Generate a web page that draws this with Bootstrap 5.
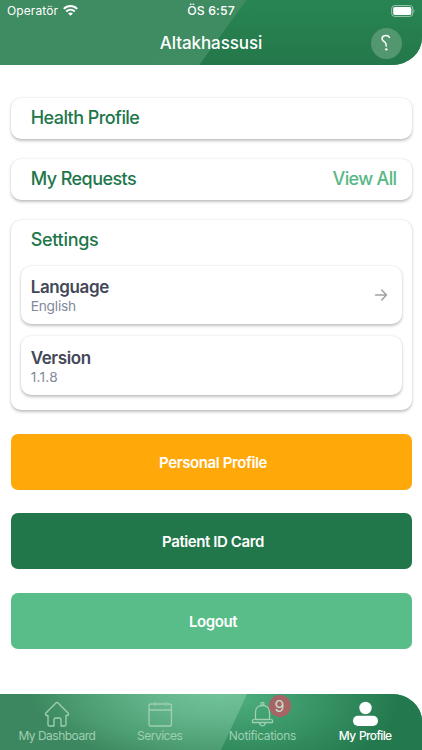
<!DOCTYPE html>
<html lang="en">
<head>
<meta charset="utf-8">
<meta name="viewport" content="width=device-width, initial-scale=1">
<title>Altakhassusi</title>
<link href="https://cdn.jsdelivr.net/npm/bootstrap@5.3.0/dist/css/bootstrap.min.css" rel="stylesheet">
<style>
body{font-family:Inter,"Liberation Sans",sans-serif;width:422px;height:750px;overflow:hidden;background:#fff}
svg{display:block;flex:none}
.app-head{height:65.4px;border-bottom-right-radius:30px 27px;overflow:hidden;color:#fff;
 background:linear-gradient(to bottom right,#3f8b62,#3f8b62 60%,#438f66)}
.slant{inset:0}
.status{height:21px;font-size:12px;line-height:21px;padding:0 7px}
.side{flex:1 1 0}
.carrier{letter-spacing:.1px}
.clock{font-weight:500;font-size:12.3px;letter-spacing:.12px}
.title-row{height:44px}
.app-title{font-size:17px;font-weight:500;line-height:22px;letter-spacing:-.1px}
.help{width:31px;height:31px;background:#52976f;margin-right:20.5px}
.content{padding:32.6px 10.5px 0}
.panel{background:#fff;border-radius:10px;box-shadow:0 1.5px 3px rgba(0,0,0,.24),0 0 2px rgba(0,0,0,.06)}
.head-panel{height:41px;padding:0 15px 1px 20.2px;margin-bottom:20px}
.heading{color:#21764a;font-size:18px;font-weight:500;line-height:24px;letter-spacing:-.56px;margin:0}
.view-all{color:#57b885;font-size:18px;line-height:24px;font-weight:500;letter-spacing:-.65px;text-decoration:none}
.settings{height:190px;padding:8px 10px 0}
.settings .heading{padding-left:10.2px;margin-bottom:14px;letter-spacing:-.3px}
.item{height:58.5px;padding:0 14px 0 10.2px;margin-bottom:12px}
.item-copy{padding-top:2px}
.item-name{font-size:17px;font-weight:600;color:#434858;line-height:20px;letter-spacing:-.38px}
.item-val{font-size:13.7px;color:#83889a;line-height:18px;letter-spacing:-.2px}
.item-val.num{letter-spacing:.25px}
.action{height:56px;border-radius:7px;color:#fff;font-size:15px;font-weight:600;letter-spacing:-.41px;border:0;width:100%;margin-bottom:23.4px;padding:2px 0 0 4px}
.a-orange{background:#ffa80a}.a-dark{background:#21764a}.a-light{background:#58bd88}
.tabs{left:0;right:0;bottom:0;height:56px;border-top-right-radius:30px 27px;overflow:hidden;padding:0 5.5px;
 background:radial-gradient(ellipse 190px 80px at 220px -5px,#72c49b 0,#65b68d 35%,#4d9d72 75%,#3c875f 100%)}
.tab{color:#9fd0b3;font-size:12px;font-weight:400;line-height:16px;padding-top:7px;text-decoration:none;flex:1 1 0;white-space:nowrap;letter-spacing:-.5px}
.tab.alerts{letter-spacing:-.35px}
.tab.current{color:#fff;font-weight:500;letter-spacing:-.65px;word-spacing:1px}
.count{width:22px;height:22px;background:#a76464;color:#c5ddca;font-size:16px;line-height:22px;left:57.5px;top:1px;letter-spacing:0}
</style>
</head>
<body class="position-relative">
<header class="app-head position-relative">
  <svg class="slant position-absolute" width="422" height="66" viewBox="0 0 422 66"><defs><linearGradient id="hg" x1="0" y1="0" x2="0" y2="1"><stop stop-color="#288553"/><stop offset="1" stop-color="#24774a"/></linearGradient></defs><path d="M246.500 0H422V66H198.500Z" fill="url(#hg)"/></svg>
  <div class="status position-relative d-flex align-items-center">
    <div class="side d-flex align-items-center"><span class="carrier">Operatör</span>
      <svg class="ms-1" width="17" height="12" viewBox="-.5 .5 17 12" fill="none" stroke="#fff" stroke-width="2"><path d="M1.300 4.400C5 .6 11 .6 14.700 4.400M3.700 7C6.200 4.600 9.800 4.600 12.300 7"/><path d="M8 11.300 5.600 8.900C7 7.700 9 7.700 10.400 8.900Z" fill="#fff" stroke="none"/></svg>
    </div>
    <span class="clock">ÖS 6:57</span>
    <div class="side d-flex justify-content-end">
      <svg class="batt" width="25" height="12" viewBox="0 0 25 12"><rect x="1.700" y=".6" width="21.100" height="10.800" rx="3" fill="none" stroke="#a0c9b0"/><rect x="3.200" y="2.100" width="18.100" height="7.800" rx="1.600" fill="#fff"/><path d="M23.700 4.200q1.500 1.800 0 3.600z" fill="#a0c9b0"/></svg>
    </div>
  </div>
  <div class="title-row position-relative d-flex align-items-center">
    <div class="side"></div><h1 class="app-title m-0">Altakhassusi</h1>
    <div class="side d-flex justify-content-end"><div class="help rounded-circle d-flex align-items-center justify-content-center">
      <svg width="12" height="18" viewBox="0 0 12 18" fill="none" stroke="#fff" stroke-width="1.500" stroke-linecap="round"><path d="M9.500 3.500C8.500 1 3.200.7 2.200 3.700 1.400 6.300 3.700 7.200 5 8.300 6 9.200 6.200 10.300 6.200 12"/><circle cx="6.200" cy="15.400" r=".8" fill="#fff" stroke-width=".9"/></svg>
    </div></div>
  </div>
</header>
<main class="content">
  <section class="panel head-panel d-flex align-items-center"><h2 class="heading">Health Profile</h2></section>
  <section class="panel head-panel d-flex align-items-center justify-content-between"><h2 class="heading">My Requests</h2><a class="view-all" href="#">View All</a></section>
  <section class="panel settings">
    <h2 class="heading">Settings</h2>
    <div class="panel item d-flex align-items-center justify-content-between">
      <div class="item-copy"><div class="item-name">Language</div><div class="item-val">English</div></div>
      <svg width="14" height="14" viewBox="0 0 14 14" fill="none" stroke="#a0a1a5" stroke-width="1.500" stroke-linecap="round" stroke-linejoin="round"><path d="M1.500 7H12.500M7.700 2 12.500 7 7.700 12"/></svg>
    </div>
    <div class="panel item d-flex align-items-center"><div class="item-copy"><div class="item-name">Version</div><div class="item-val num">1.1.8</div></div></div>
  </section>
  <div class="actions pt-4">
    <button class="btn action a-orange">Personal Profile</button>
    <button class="btn action a-dark">Patient ID Card</button>
    <button class="btn action a-light">Logout</button>
  </div>
</main>
<nav class="tabs position-absolute d-flex">
  <svg class="slant position-absolute" width="422" height="56" viewBox="0 0 422 56"><defs><radialGradient id="ng" gradientUnits="userSpaceOnUse" cx="0" cy="0" r="1" gradientTransform="translate(245 5) scale(155 80)"><stop stop-color="#4cac7c"/><stop offset=".5" stop-color="#379264"/><stop offset="1" stop-color="#23794d"/></radialGradient></defs><path d="M247 0H422V56H221Z" fill="url(#ng)"/></svg>
  <a class="tab position-relative d-flex flex-column align-items-center" href="#">
    <svg width="26" height="27" viewBox="0 0 26 27" fill="none" stroke="currentColor" stroke-width="1.300" stroke-linejoin="round"><path d="M12.200 1.800Q13 1.100 13.800 1.800L24.300 12.300Q25.200 14.500 22.800 14.500H22V23.500Q22 25 20.500 25H17V19Q17 17 15 17H12Q10 17 10 19V25H5.500Q4 25 4 23.500V14.500H3.200Q.8 14.500 1.700 12.300Z"/></svg>My Dashboard</a>
  <a class="tab position-relative d-flex flex-column align-items-center" href="#">
    <svg width="26" height="27" viewBox="0 0 26 27" fill="none" stroke="currentColor" stroke-width="1.300"><path d="M7 3H4Q2 3 2 5V23Q2 25 4 25H22.500Q24.500 25 24.500 23V5Q24.500 3 22.500 3H20M9 3H18M2 9H24.500M8 1V5M19 1V5"/></svg>Services</a>
  <a class="tab alerts position-relative d-flex flex-column align-items-center" href="#">
    <svg width="26" height="27" viewBox="0 0 26 27" fill="none" stroke="currentColor" stroke-width="1.300" stroke-linejoin="round"><circle cx="13.500" cy="2.800" r="1.500"/><path d="M6.500 18V11C6.500 7 9.500 4.500 13.500 4.500S20.500 7 20.500 11V18L23.500 19V21.500H3.500V19ZM6.500 18.500H20.500M10.500 21.500Q11 24.800 13.500 24.800T16.500 21.500"/></svg>Notifications
    <span class="count position-absolute rounded-circle text-center">9</span></a>
  <a class="tab current position-relative d-flex flex-column align-items-center" href="#">
    <svg width="26" height="27" viewBox="0 0 26 27" fill="currentColor"><circle cx="13.500" cy="7" r="6.200"/><rect x="1" y="14.800" width="25" height="10.200" rx="5"/></svg>My Profile</a>
</nav>
<script src="https://cdn.jsdelivr.net/npm/bootstrap@5.3.0/dist/js/bootstrap.bundle.min.js"></script>
</body>
</html>
